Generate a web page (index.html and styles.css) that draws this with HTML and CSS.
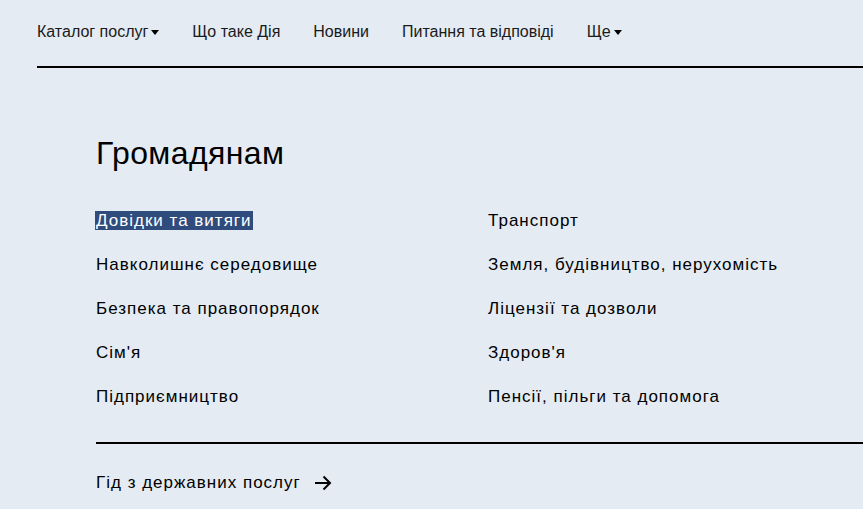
FILE: index.html
```html
<!DOCTYPE html>
<html lang="uk">
<head>
<meta charset="utf-8">
<link rel="stylesheet" href="styles.css">
</head>
<body>
<header class="top">
  <nav class="nav">
    <a class="nav-item">Каталог послуг<span class="caret"></span></a>
    <a class="nav-item">Що таке Дія</a>
    <a class="nav-item">Новини</a>
    <a class="nav-item">Питання та відповіді</a>
    <a class="nav-item">Ще<span class="caret"></span></a>
  </nav>
</header>
<main class="content">
  <h1 class="title">Громадянам</h1>
  <ul class="grid">
    <li><span class="sel">Довідки та витяги</span></li>
    <li>Транспорт</li>
    <li>Навколишнє середовище</li>
    <li>Земля, будівництво, нерухомість</li>
    <li>Безпека та правопорядок</li>
    <li>Ліцензії та дозволи</li>
    <li>Сім'я</li>
    <li>Здоров'я</li>
    <li>Підприємництво</li>
    <li>Пенсії, пільги та допомога</li>
  </ul>
  <div class="footer-link">
    <a class="guide">Гід з державних послуг
      <svg class="arrow" width="18" height="16" viewBox="0 0 18 16"><path d="M1 8H16M9.5 1.5L16 8L9.5 14.5" fill="none" stroke="#000" stroke-width="2"/></svg>
    </a>
  </div>
</main>
</body>
</html>
```
FILE: styles.css
```css
html, body { margin: 0; padding: 0; }
body {
  background: #e4ebf3;
  color: #000;
  font-family: "Liberation Sans", Arial, sans-serif;
  width: 863px;
  height: 509px;
  overflow: hidden;
}
.top {
  margin-left: 37px;
  border-bottom: 2px solid #000;
  height: 66px;
}
.nav {
  display: flex;
  gap: 33px;
  padding-top: 23px;
  font-size: 16px;
  line-height: 18px;
  color: #1a1a1a;
}
.nav-item { display: flex; align-items: center; }
.caret {
  display: inline-block;
  margin-left: 3px;
  width: 0; height: 0;
  border-left: 4px solid transparent;
  border-right: 4px solid transparent;
  border-top: 5px solid #000;
}
.content {
  margin-left: 96px;
}
.title {
  margin: 66px 0 0 0;
  font-weight: normal;
  font-size: 32px;
  line-height: 38px;
  letter-spacing: 0.4px;
}
.grid {
  list-style: none;
  margin: 0; padding: 0;
  margin-top: 37px;
  display: grid;
  grid-template-columns: 392px 1fr;
  row-gap: 20px;
  font-size: 17px;
  line-height: 24px;
  letter-spacing: 1px;
}
.sel {
  background: #2f4c7d;
  color: #fff;
  margin-left: -1px;
  padding: 0 1px;
}
.footer-link {
  margin-top: 33px;
  border-top: 2px solid #000;
  padding-top: 27px;
}
.guide {
  display: inline-flex;
  align-items: center;
  gap: 13px;
  font-size: 17px;
  line-height: 24px;
  letter-spacing: 1px;
}
```
